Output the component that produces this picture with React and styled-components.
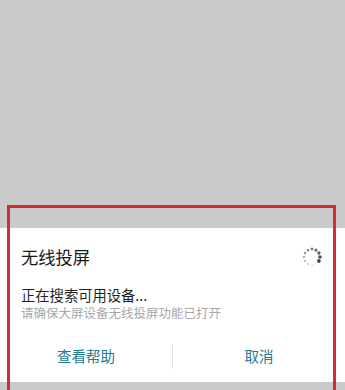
import React from "react";
import styled, { createGlobalStyle } from "styled-components";

const GlobalStyle = createGlobalStyle`
  html, body {
    margin: 0;
    padding: 0;
    background: #cbcbcb;
  }
  body {
    font-family: "Noto Sans CJK SC", "Noto Sans", sans-serif;
  }
`;

const Screen = styled.div`
  position: relative;
  width: 345px;
  height: 390px;
  display: flex;
  flex-direction: column;
  background: #cbcbcb;
  overflow: hidden;
`;

const Dimmed = styled.div`
  flex: 1;
`;

const Dialog = styled.div`
  background: #ffffff;
  height: 154px;
  box-sizing: border-box;
  padding: 17px 0 6px;
  display: flex;
  flex-direction: column;
`;

const BottomBar = styled.div`
  height: 8px;
  background: #c9c9c9;
`;

const TitleRow = styled.div`
  display: flex;
  align-items: center;
  justify-content: space-between;
  padding: 0 23px 0 21px;
  height: 24px;
`;

const Title = styled.div`
  font-size: 17.3px;
  line-height: 24px;
  color: #1a1a1a;
`;

const Body = styled.div`
  padding: 16px 21px 0;
`;

const Message = styled.div`
  font-size: 14.3px;
  line-height: 20px;
  color: #1f1f1f;
`;

const Hint = styled.div`
  font-size: 12.5px;
  line-height: 16px;
  color: #a8a8a8;
`;

const Actions = styled.div`
  margin-top: 15px;
  height: 40px;
  display: flex;
  align-items: center;
`;

const ActionButton = styled.div`
  flex: 1;
  text-align: center;
  font-size: 14.5px;
  line-height: 40px;
  color: #267a8e;
`;

const Divider = styled.div`
  width: 1px;
  height: 25px;
  background: #e6e6e6;
`;

const Highlight = styled.div`
  position: absolute;
  left: 7px;
  top: 205px;
  width: 329px;
  height: 200px;
  box-sizing: border-box;
  border: 3px solid #d42b34;
  pointer-events: none;
`;

function Spinner() {
  const dots = Array.from({ length: 12 }, (_, i) => {
    const angle = (i / 12) * Math.PI * 2 - Math.PI / 2;
    const x = 10 + Math.cos(angle) * 8;
    const y = 10 + Math.sin(angle) * 8;
    // darkest dot sits at the lower right, fading backwards
    const k = (i - 4 + 12) % 12;
    const opacity = 0.15 + (k / 11) * 0.8;
    const r = 0.8 + (k / 11) * 1.0;
    return <circle key={i} cx={x} cy={y} r={r} fill="#333" opacity={opacity} />;
  });
  return (
    <svg width="20" height="20" viewBox="0 0 20 20">
      <g transform="rotate(30 10 10)">{dots}</g>
    </svg>
  );
}

export default function App() {
  return (
    <>
      <GlobalStyle />
      <Screen>
        <Dimmed />
        <Dialog>
          <TitleRow>
            <Title>无线投屏</Title>
            <Spinner />
          </TitleRow>
          <Body>
            <Message>正在搜索可用设备...</Message>
            <Hint>请确保大屏设备无线投屏功能已打开</Hint>
          </Body>
          <Actions>
            <ActionButton>查看帮助</ActionButton>
            <Divider />
            <ActionButton>取消</ActionButton>
          </Actions>
        </Dialog>
        <BottomBar />
        <Highlight />
      </Screen>
    </>
  );
}
